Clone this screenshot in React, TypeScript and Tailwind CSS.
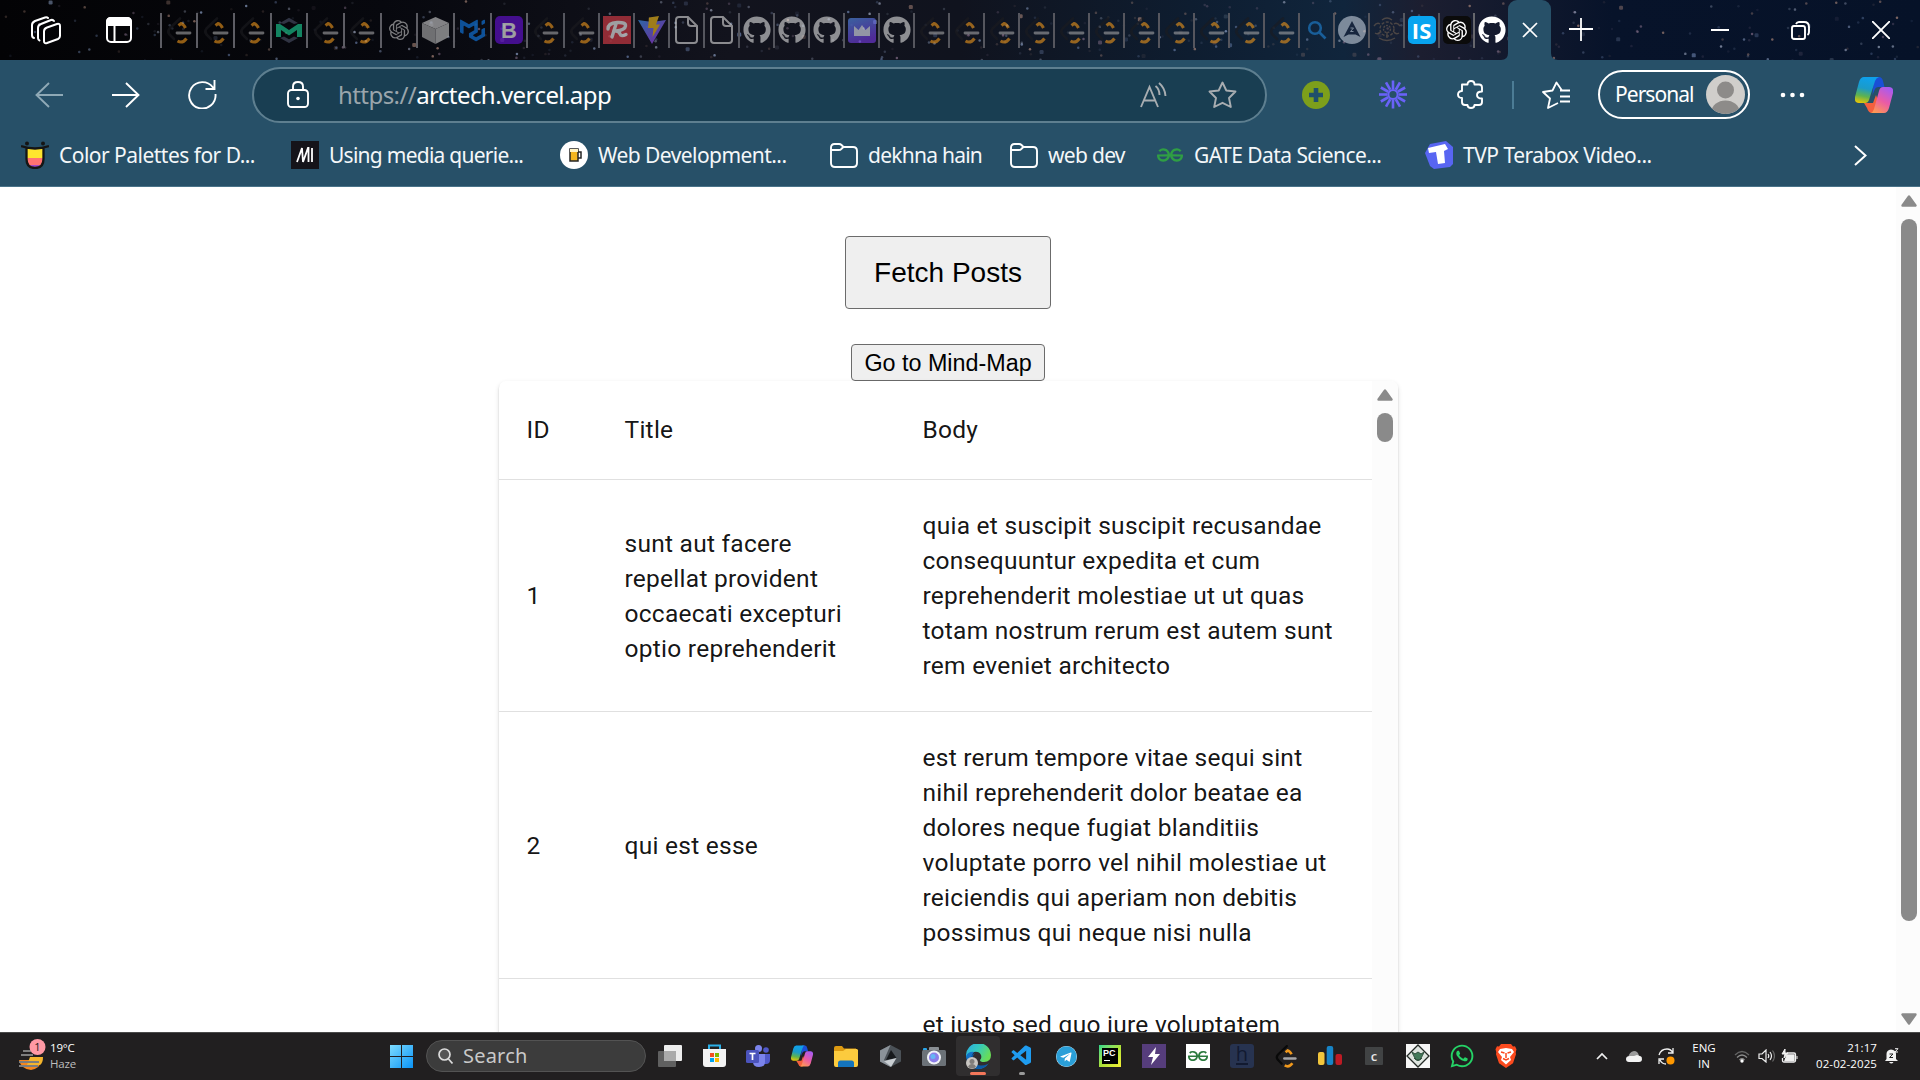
import React from 'react';
import { FaGithub, FaWhatsapp, FaTelegram } from 'react-icons/fa';
import { SiOpenai, SiMui, SiBrave, SiGeeksforgeeks } from 'react-icons/si';
import { VscVscode } from 'react-icons/vsc';

/* ---------- small drawings ---------- */

const LeetCode = ({ size = 28, dark = '#1c1c20' }: { size?: number; dark?: string }) => (
  <svg width={size} height={size} viewBox="0 0 28 28" fill="none" strokeWidth="2.6" strokeLinecap="round">
    <path d="M15 2.5 4.5 12.5Q2 15.5 4.5 18.5L9 23" stroke={dark} />
    <path d="M13.500 9.500 16 7.500Q18.500 8 20.500 12M12.500 25Q17.500 28 21.500 22.500" stroke="#f0981c" strokeLinecap="butt" strokeWidth="3" />
    <path d="M12 17H25" stroke="#a4a4a6" strokeWidth="2.8" />
  </svg>
);

const Mailtrap = () => (
  <svg width="28" height="28" viewBox="0 0 28 28">
    <path d="M5 7 14 1.8 23 7l-4 1-5-2.6L9 8ZM5 22l9 5 9-5-4-1.5-5 2.7-5-2.7Z" fill="#4c5268" />
    <path d="M1 21V8h4l9 6 9-6h4v13h-5v-7l-8 5.500-8-5.500v7Z" fill="#1dd79a" />
  </svg>
);

const Cube = () => (
  <svg width="29" height="29" viewBox="0 0 29 29">
    <path d="M14.5 1 28 7 14.5 13 1 7Z" fill="#d3d3d3" />
    <path d="M1 7 14.5 13V28L1 21Z" fill="#b4b4b4" />
    <path d="M28 7 14.5 13V28L28 21Z" fill="#cbcbcb" />
  </svg>
);

const Vite = () => (
  <svg width="28" height="28" viewBox="0 0 28 28">
    <defs>
      <linearGradient id="vite" x1="0" y1="0" x2="1" y2="1">
        <stop stopColor="#41a0ff" />
        <stop offset="1" stopColor="#bd34fe" />
      </linearGradient>
    </defs>
    <path d="M0 4 14 28 28 4 14 6Z" fill="url(#vite)" />
    <path d="M11 1.5 21 0 18 8.5h4L14.5 21l1-9H10Z" fill="#ffc61a" />
  </svg>
);

const Doc = () => (
  <svg width="23" height="28" viewBox="0 0 23 28" fill="none" stroke="#dcdcdc" strokeWidth="2">
    <path d="M13 1H4Q1 1 1 4V24Q1 27 4 27H19Q22 27 22 24V10L13 1V7Q13 10 16 10H22" />
  </svg>
);

const Crown = () => (
  <svg width="28" height="25" viewBox="0 0 28 25">
    <defs>
      <linearGradient id="crown" x1="0" y1="0" x2="0.4" y2="1">
        <stop stopColor="#5796f5" />
        <stop offset="1" stopColor="#7a3bea" />
      </linearGradient>
    </defs>
    <rect width="28" height="25" rx="3" fill="url(#crown)" />
    <path d="M6 8l4.500 4L14 7l3.500 5L22 8v10H6Z" fill="#e9ecff" />
  </svg>
);

const Emblem = () => (
  <svg width="28" height="26" viewBox="0 0 28 26" fill="none" stroke="#6f5f50" strokeWidth="1.400">
    <circle cx="14" cy="12" r="7" strokeDasharray="3 1.500" />
    <circle cx="14" cy="12" r="3.500" strokeDasharray="2 1" />
    <path d="M1 9q3-4 6-2M27 9q-3-4-6-2M2 16q3 2 5-1M26 16q-3 2-5-1M9 3q5-4 10 0M6 21q8 5 16 0M14 15v6" />
  </svg>
);

const Copilot = ({ size, id }: { size: number; id: string }) => (
  <svg width={size} height={size} viewBox="0 0 38 38">
    <defs>
      <linearGradient id={id + 'a'} x1="0.3" y1="0" x2="0.1" y2="1">
        <stop stopColor="#0fa0ea" />
        <stop offset="0.4" stopColor="#1b9bc8" />
        <stop offset="0.7" stopColor="#5fb34e" />
        <stop offset="1" stopColor="#f6c800" />
      </linearGradient>
      <linearGradient id={id + 'b'} x1="0.7" y1="0" x2="0.2" y2="1">
        <stop stopColor="#a95bf0" />
        <stop offset="0.5" stopColor="#ea5ba6" />
        <stop offset="1" stopColor="#ff9a52" />
      </linearGradient>
    </defs>
    <path d="M19 1h5q3 0 4 4l1.500 6h-6q-3 0-4 3l-2 5Z" fill="#1a4fd6" />
    <path d="M9 27h9l3-8 3 8-4 10h-3q-3.500 0-5-5Z" fill="#f4603e" />
    <path d="M9 1H24q-3 1-4 4l-6 19q-1 3-4 3H4q-5 0-4-6L4 6Q5.500 1 9 1Z" fill={'url(#' + id + 'a)'} />
    <path d="M28 11h6q5 0 4 6l-4 15q-1.500 5-5 5H16q2-1 3-4l5-18q1-4 4-4Z" fill={'url(#' + id + 'b)'} />
  </svg>
);

const Workspaces = () => (
  <svg width="30" height="29" viewBox="0 0 30 29" fill="none" stroke="#fff" strokeWidth="2" strokeLinejoin="round" strokeLinecap="round">
    <path d="M16 11.500 26 8q3-.8 3 2V20q0 2-2 3L16 27q-3 1-3-2V15.500q0-3 3-4Z" />
    <path d="M8.500 24.500Q7 24 7 22V12q0-3 3-4L20 4q2-.5 3 1" />
    <path d="M3 22q-2-.5-2-3V9q0-2.500 3-4L14 1.500q2-.5 3 .5" />
  </svg>
);

const TabActions = () => (
  <svg width="26" height="26" viewBox="0 0 26 26" fill="none" stroke="#fff" strokeWidth="2">
    <rect x="1" y="1" width="24" height="24" rx="4" />
    <path d="M1 8V5Q1 1 5 1H21q4 0 4 4V8Z" fill="#fff" />
    <path d="M8.500 7V25" />
  </svg>
);

/* ---------- title bar ---------- */

const stars = Array.from({ length: 420 }, (_, i) => {
  const n = (k: number) => {
    const v = Math.sin(i * 12.9898 + k * 78.233) * 43758.5453;
    return v - Math.floor(v);
  };
  const tint = ['#8fa3c8', '#aeb8d0', '#87708a', '#6d83ae', '#b08a7c'][Math.floor(n(4) * 5)];
  return { x: n(1) * 1920, y: n(2) * 60, s: n(3) > 0.88 ? 4 : 2.5, o: 0.1 + n(5) * n(5) * 0.6, tint };
});

const Starfield = () => (
  <svg className="absolute inset-0" width="1920" height="60">
    {stars.map((s, i) => (
      <rect key={i} x={s.x} y={s.y} width={s.s} height={s.s} rx="1.200" fill={s.tint} opacity={s.o} />
    ))}
  </svg>
);

const RLogo = () => (
  <svg width="28" height="28" viewBox="0 0 28 28">
    <rect width="28" height="28" fill="#e8404a" />
    <path d="M13 8 9 21M5 13Q5 7 14 6.500q9-.5 8.500 3.500-.5 4-9.500 5 3 0 4 3 1 3 6 .5" fill="none" stroke="#fff" strokeWidth="3.400" strokeLinecap="round" strokeLinejoin="round" />
  </svg>
);

const Boot = () => (
  <div className="flex h-7 w-7 items-center justify-center rounded-[5px] bg-[#6a11e0] font-['Liberation_Sans',sans-serif] text-[22px] font-bold text-white">B</div>
);

const lc = <LeetCode />;
const gh = <FaGithub size={28} color="#e0e0e0" />;
const wideTabs: React.ReactNode[] = [
  lc, lc, lc, <Mailtrap />, lc, lc, <SiOpenai size={20} color="#ccc" />, <Cube />, <SiMui size={25} color="#1180f2" />, <Boot />, lc,
];
const narrowTabs: React.ReactNode[] = [
  lc, <RLogo />, <Vite />, <Doc />, <Doc />, gh, gh, gh, <Crown />, gh,
  lc, lc, lc, lc, lc, lc, lc, lc, lc, lc, lc,
  <svg width="20" height="20" viewBox="0 0 20 20" fill="none" stroke="#1f86d8" strokeWidth="2.600"><circle cx="8" cy="8" r="5.800" /><path d="M12 12l6.500 6.500" /></svg>,
  <svg width="28" height="28" viewBox="0 0 28 28"><circle cx="14" cy="14" r="14" fill="#c4cedb" /><path d="M14 5 22.500 21 17.500 18.500h-7L5.500 21Z" fill="#1b2740" /><path d="M12.500 12h3l-3 3.500h3" stroke="#c4cedb" fill="none" /></svg>,
  <Emblem />,
];

const TitleBar = () => (
  <header className="relative flex h-[60px] shrink-0 items-center overflow-hidden bg-[linear-gradient(90deg,#030305_0%,#07080e_20%,#12131d_38%,#10131e_50%,#0e1d30_62%,#10253c_70%,#1c1e30_74%,#07132a_84%,#061228_100%)]">
    <Starfield />
    <div className="relative flex h-full w-full items-center">
      <div className="flex w-[159.500px] shrink-0 items-center pl-[31px]">
        <Workspaces />
        <div className="ml-[45px]"><TabActions /></div>
      </div>
      {wideTabs.map((t, i) => (
        <div key={i} className="flex h-[35px] w-[36.700px] shrink-0 items-center justify-center border-l-2 border-[#5d5d64]">
          <div className="opacity-60">{t}</div>
        </div>
      ))}
      {narrowTabs.map((t, i) => (
        <div key={i} className="flex h-[35px] w-[35px] shrink-0 items-center justify-center border-l-2 border-[#55565e]">
          <div className="opacity-60">{t}</div>
        </div>
      ))}
      <div className="flex h-[35px] w-[35px] shrink-0 items-center justify-center border-l-2 border-[#55565e]">
        <div className="flex h-7 w-7 items-center justify-center rounded-[5px] bg-[#08a4ef] font-['Open_Sans',sans-serif] text-[22px] font-bold text-white">IS</div>
      </div>
      <div className="flex h-[35px] w-[35px] shrink-0 items-center justify-center border-l-2 border-[#55565e]">
        <div className="flex h-7 w-7 items-center justify-center rounded-[5px] bg-[#0b0b0b]"><SiOpenai size={21} color="#fff" /></div>
      </div>
      <div className="flex h-[35px] w-[35px] shrink-0 items-center justify-center border-l-2 border-[#66676d]">
        <FaGithub size={28} color="#fff" />
      </div>
      <div className="relative flex h-full w-[43px] shrink-0 items-center justify-center rounded-t-[9px] bg-[#275068]">
        <svg className="absolute bottom-0 -left-[7px]" width="7" height="7"><path d="M7 0v7H0Q7 7 7 0Z" fill="#275068" /></svg>
        <svg className="absolute bottom-0 -right-[7px]" width="7" height="7"><path d="M0 0v7h7Q0 7 0 0Z" fill="#275068" /></svg>
        <svg width="16" height="16" viewBox="0 0 16 16" stroke="#fff" strokeWidth="1.700"><path d="M1 1l14 14M15 1 1 15" /></svg>
      </div>
      <svg className="ml-[18px] shrink-0" width="24" height="24" viewBox="0 0 24 24" stroke="#fff" strokeWidth="1.800"><path d="M0 11h24M12 0v23" /></svg>
      <div className="ml-auto flex w-[210px] shrink-0 items-center">
        <svg width="18" height="20" viewBox="0 0 18 20" stroke="#fff" strokeWidth="2" className="ml-px"><path d="M0 10h18" /></svg>
        <svg className="ml-[62px]" width="19" height="19" viewBox="0 0 19 19" fill="none" stroke="#fff" strokeWidth="1.900"><rect x="1" y="5" width="13" height="13" rx="2" /><path d="M5 3Q6 1 8 1h5q5 0 5 5v5q0 2-1.500 3" /></svg>
        <svg className="ml-[62px]" width="18" height="18" viewBox="0 0 18 18" stroke="#fff" strokeWidth="1.900"><path d="M0 0l18 18M18 0 0 18" /></svg>
      </div>
    </div>
  </header>
);

/* ---------- toolbar ---------- */

const Toolbar = () => (
  <div className="flex h-[69px] items-center pl-[35px]">
    <svg width="28" height="26" viewBox="0 0 28 26" fill="none" stroke="#8fa9b6" strokeWidth="1.900"><path d="M28 13H1.500M14 1 1.500 13 14 25" /></svg>
    <svg className="ml-[49px]" width="28" height="26" viewBox="0 0 28 26" fill="none" stroke="#fff" strokeWidth="1.900"><path d="M0 13H26.500M14 1 26.500 13 14 25" /></svg>
    <svg className="ml-[48px]" width="29" height="29" viewBox="0 0 29 29" fill="none" stroke="#fff" strokeWidth="1.900"><path d="M27.500 14A13.200 13.200 0 1 1 25 7.500L26.500 9M26.500 0V9H17.500" /></svg>
    <div className="ml-[35px] flex h-[56px] w-[1015px] items-center rounded-full border-2 border-[#5e7f90] bg-[#193e52] pl-[33px]">
      <svg width="22" height="27" viewBox="0 0 22 27" fill="none" stroke="#fff" strokeWidth="1.900"><rect x="1" y="9" width="20" height="17" rx="3.500" /><path d="M6 9V5.500q0-4.500 5-4.500t5 4.500V9" /><circle cx="11" cy="17.500" r="1.800" fill="#fff" stroke="none" /></svg>
      <div className="ml-[29px] w-[700px] whitespace-nowrap font-['Noto_Sans','Open_Sans',sans-serif] text-[24px] leading-8 tracking-[-0.57px] text-[#9aa5ac]">
        https://<span className="text-white">arctech.vercel.app</span>
      </div>
      <svg className="ml-auto" width="27" height="26" viewBox="0 0 27 26" fill="none" stroke="#a8adb1" strokeWidth="1.900"><path d="M1 25 9.500 5 18 25M4 18.500H15M15.500 4q4 3 4 9M19 1q6 5 6.500 13" /></svg>
      <svg className="ml-[41px] mr-[28px]" width="29" height="28" viewBox="0 0 29 28" fill="none" stroke="#a8adb1" strokeWidth="1.900" strokeLinejoin="round"><path d="M14.500 1.500 18.300 9.500 27.500 10.500 21 17 22.800 26 14.500 21.800 6.200 26 8 17 1.500 10.500 10.700 9.500Z" /></svg>
    </div>
    <svg className="ml-[35px]" width="28" height="28" viewBox="0 0 28 28"><circle cx="14" cy="14" r="14" fill="#7d9f1b" /><path d="M14 7v14M7 14h14" stroke="#20506b" strokeWidth="4.600" /></svg>
    <svg className="ml-[49px]" width="28" height="29" viewBox="-14 -14.500 28 29" fill="none" stroke="#6a62f8" strokeWidth="2.600">
      <circle r="4.600" strokeWidth="2" />
      {Array.from({ length: 12 }, (_, i) => <path key={i} d="M0-5.500V-14" transform={'rotate(' + i * 30 + ')'} />)}
    </svg>
    <svg className="ml-[50px]" width="27" height="29" viewBox="0 0 27 29" fill="none" stroke="#fff" strokeWidth="1.900" strokeLinejoin="round"><path d="M5 4.500H10.500Q10.500 1 14 1t3.500 3.500H22q3 0 3 3V11.500q-5 0-5 3.500t5 3.500V22q0 3-3 3H17.500q0 3-3.500 3T10.500 25H8q-3 0-3-3V18q-4 0-4-3.500T5 11Z" /></svg>
    <div className="ml-[28px] h-7 w-[2px] bg-[#4c7c95]" />
    <svg className="ml-[28px]" width="29" height="28" viewBox="0 0 29 28" fill="none" stroke="#fff" strokeWidth="1.800" strokeLinejoin="round"><path d="M20 9.500 14.500 1.500 10.500 9.500 1 11 8 17.500 6 27 16 22M18 9.500H28M18 15.500H28M18 20.500H28" /></svg>
    <div className="ml-[27px] flex h-[49px] w-[152px] items-center rounded-full border-2 border-white pl-[15px]">
      <div className="w-[89px] whitespace-nowrap font-['Noto_Sans','Open_Sans',sans-serif] text-[21px] tracking-[-0.95px] text-white">Personal</div>
      <svg className="ml-0.5 shrink-0" width="39" height="39" viewBox="0 0 39 39"><defs><clipPath id="avatar"><circle cx="19.500" cy="19.500" r="19.500" /></clipPath></defs><g clipPath="url(#avatar)"><rect width="39" height="39" fill="#d0cecb" /><circle cx="19.500" cy="15" r="8.500" fill="#8d8b89" /><ellipse cx="19.500" cy="37" rx="14" ry="11.500" fill="#8d8b89" /></g></svg>
    </div>
    <svg className="ml-[30px]" width="25" height="6" viewBox="0 0 25 6" fill="#fff"><circle cx="3" cy="3" r="2.300" /><circle cx="12.500" cy="3" r="2.300" /><circle cx="22" cy="3" r="2.300" /></svg>
    <div className="ml-[50px]"><Copilot size={38} id="tb" /></div>
  </div>
);

const Folder = () => (
  <svg width="28" height="25" viewBox="0 0 28 25" fill="none" stroke="#fff" strokeWidth="1.900" strokeLinejoin="round"><path d="M1 4.500Q1 1 4.500 1H9q1.500 0 2.500 1L13.500 4H23q4 0 4 4V20q0 4-4 4H5q-4 0-4-4ZM1 7H8.500q2 0 3-1.200L13.500 4" /></svg>
);

const bookmarks: { icon: React.ReactNode; text: string; cls: string }[] = [
  {
    icon: <svg width="28" height="28" viewBox="0 0 28 28"><circle cx="6" cy="2.500" r="2" fill="#151515" /><circle cx="22" cy="2.500" r="2" fill="#151515" /><path d="M5.500 7h17V18q0 9-8.500 9t-8.500-9Z" fill="#ffe52e" /><path d="M6 17h16q0 7-3 8H9q-3-2-3-8Z" fill="#ff7272" /><path d="M9 24h10q-2 3-5 3t-5-3Z" fill="#a24ac8" /><path d="M0 5q14 5 28 0M5.500 7V18q0 9 8.500 9t8.500-9V7" fill="none" stroke="#151515" strokeWidth="2.300" /></svg>,
    text: 'Color Palettes for D...', cls: 'w-[270px] tracking-[-0.52px]',
  },
  {
    icon: <svg width="28" height="28" viewBox="0 0 28 28"><rect width="28" height="28" fill="#15141a" /><path d="M6 21 11 7l1 14L17 7h.5v14M21 7v14" fill="none" stroke="#fff" strokeWidth="1.800" /></svg>,
    text: 'Using media querie...', cls: 'w-[269px] tracking-[-0.74px]',
  },
  {
    icon: <svg width="28" height="28" viewBox="0 0 28 28"><circle cx="14" cy="14" r="14" fill="#fff" /><path d="M10 8h8v12h-8Z" fill="#f4b51e" stroke="#252525" strokeWidth="1.500" /><path d="M18 11h3v6h-3" fill="none" stroke="#252525" strokeWidth="1.500" /><path d="M10 8h8v3h-8Z" fill="#fff3c4" /></svg>,
    text: 'Web Development...', cls: 'w-[270px] tracking-[-0.56px]',
  },
  { icon: <Folder />, text: 'dekhna hain', cls: 'w-[180px] tracking-[-0.75px]' },
  { icon: <Folder />, text: 'web dev', cls: 'w-[146px] tracking-[-0.7px]' },
  { icon: <SiGeeksforgeeks size={26} color="#2f9e44" />, text: 'GATE Data Science...', cls: 'w-[269px] tracking-[-0.56px]' },
  {
    icon: <svg width="28" height="28" viewBox="0 0 28 28"><path d="M5 3 21 0l7 6v17l-3 3-16 2-4-3L0 12Z" fill="#5865f2" /><path d="M3 7 20 3l3 5-4 2 1 12-7 1-2-12-7 1Z" fill="#fff" /></svg>,
    text: 'TVP Terabox Video...', cls: 'w-[429px] tracking-[-0.5px]',
  },
];

const Bookmarks = () => (
  <div className="flex h-[58px] items-center border-b border-[#4a7389] pb-[5px] pl-[21px]">
    {bookmarks.map((b) => (
      <div key={b.text} className={'flex shrink-0 items-center ' + b.cls}>
        <div className="flex w-7 shrink-0 justify-center">{b.icon}</div>
        <div className="ml-[10px] whitespace-nowrap pb-px font-['Noto_Sans','Open_Sans',sans-serif] text-[21px] leading-7 text-[#f4f7f9]">{b.text}</div>
      </div>
    ))}
    <svg width="13" height="21" viewBox="0 0 13 21" fill="none" stroke="#fff" strokeWidth="2"><path d="M1 1 11.500 10.500 1 20" /></svg>
  </div>
);

/* ---------- page ---------- */

const rows = [
  {
    id: '1',
    title: 'sunt aut facere\nrepellat provident\noccaecati excepturi\noptio reprehenderit',
    body: 'quia et suscipit suscipit recusandae\nconsequuntur expedita et cum\nreprehenderit molestiae ut ut quas\ntotam nostrum rerum est autem sunt\nrem eveniet architecto',
  },
  {
    id: '2',
    title: 'qui est esse',
    body: 'est rerum tempore vitae sequi sint\nnihil reprehenderit dolor beatae ea\ndolores neque fugiat blanditiis\nvoluptate porro vel nihil molestiae ut\nreiciendis qui aperiam non debitis\npossimus qui neque nisi nulla',
  },
  {
    id: '3',
    title: 'ea molestias quasi\nexercitationem\nrepellat qui ipsa sit\naut',
    body: 'et iusto sed quo iure voluptatem\noccaecati omnis eligendi aut ad\nvoluptatem doloribus vel accusantium\nquis pariatur molestiae porro eius\nodio et labore et velit aut',
  },
];

const Arrow = ({ down }: { down?: boolean }) => (
  <svg className={down ? 'rotate-180' : ''} width="16" height="12" viewBox="0 0 16 12"><path d="M8 1.500 14.500 10.500H1.500Z" fill="#8a8a8a" stroke="#8a8a8a" strokeWidth="2.400" strokeLinejoin="round" /></svg>
);

const PostsTable = () => (
  <div className="flex h-[700px] w-[899px] shrink-0 overflow-hidden rounded-[7px] bg-white shadow-[0_3px_2px_-2px_rgba(0,0,0,0.2),0_2px_2px_rgba(0,0,0,0.14),0_2px_5px_rgba(0,0,0,0.12)]">
    <table className="w-[873px] shrink-0 table-fixed border-separate border-spacing-0 self-start font-['Roboto',sans-serif] text-[24.500px] leading-[35.030px] tracking-[0.262px] text-[rgba(0,0,0,0.93)]">
      <thead>
        <tr className="h-[99px] text-left">
          <th className="w-[98px] border-b border-[#e0e0e0] pl-7 font-normal">ID</th>
          <th className="w-[298px] border-b border-[#e0e0e0] pl-7 font-normal">Title</th>
          <th className="border-b border-[#e0e0e0] pl-7 font-normal">Body</th>
        </tr>
      </thead>
      <tbody>
        {rows.map((r) => (
          <tr key={r.id}>
            <td className="border-b border-[#e0e0e0] py-7 pl-7 align-middle">{r.id}</td>
            <td className="whitespace-pre border-b border-[#e0e0e0] py-7 pl-7 align-middle">{r.title}</td>
            <td className="whitespace-pre border-b border-[#e0e0e0] py-7 pl-7 align-middle">{r.body}</td>
          </tr>
        ))}
      </tbody>
    </table>
    <div className="flex w-[26px] shrink-0 flex-col items-center bg-[#fcfcfc] pt-2">
      <Arrow />
      <div className="mt-3 h-[29px] w-4 rounded-full bg-[#8a8a8a]" />
    </div>
  </div>
);

const Page = () => (
  <div className="flex h-[845px] shrink-0 overflow-hidden bg-white">
    <main className="flex flex-1 flex-col items-center pt-[49px]">
      <button className="h-[73px] w-[206px] shrink-0 rounded-[4px] border border-[#6b6b6b] bg-[#efefef] font-['Liberation_Sans',sans-serif] text-[28px] text-black">Fetch Posts</button>
      <button className="mt-[35px] h-[37px] w-[194px] shrink-0 rounded-[4px] border border-[#6b6b6b] bg-[#efefef] font-['Liberation_Sans',sans-serif] text-[23.330px] leading-8 text-black">Go to Mind-Map</button>
      <PostsTable />
    </main>
    <div className="flex w-6 shrink-0 flex-col items-center bg-[#fcfcfc] pl-[2px] pt-2">
      <Arrow />
      <div className="mb-[92px] mt-3 w-4 flex-1 rounded-full bg-[#8a8a8a]" />
      <div className="mb-[7px]"><Arrow down /></div>
    </div>
  </div>
);

/* ---------- taskbar ---------- */

const TaskView = () => (
  <svg width="24" height="22" viewBox="0 0 24 22"><rect x="6" width="18" height="16" rx="1" fill="#ededed" /><rect y="6" width="18" height="16" rx="1" fill="#606060" /><rect x="6" y="6" width="12" height="10" fill="#aaa" /></svg>
);
const Store = () => (
  <svg width="23" height="24" viewBox="0 0 23 24"><path d="M6 6V1.500h11V6" fill="none" stroke="#2bb0e8" strokeWidth="2" /><path d="M0 5h23v15q0 3-3 3H3q-3 0-3-3Z" fill="#f3f3f3" /><path d="M7 9h4v4H7Z" fill="#f25022" /><path d="M12 9h4v4h-4Z" fill="#7fba00" /><path d="M7 14h4v4H7Z" fill="#00a4ef" /><path d="M12 14h4v4h-4Z" fill="#ffb900" /></svg>
);
const Teams = () => (
  <svg width="24" height="22" viewBox="0 0 24 22"><circle cx="20" cy="5" r="2.800" fill="#5059c9" /><path d="M17 9h7v6q0 4-4 4h-3Z" fill="#5059c9" /><circle cx="12.500" cy="3.500" r="3.500" fill="#7b83eb" /><path d="M7 9h12v8q0 5-6 5t-6-5Z" fill="#7b83eb" /><rect y="5" width="13" height="13" rx="1.500" fill="#4b53bc" /><path d="M3.500 8.500h6M6.500 8.500V15" stroke="#fff" strokeWidth="1.700" /></svg>
);
const Explorer = () => (
  <svg width="24" height="21" viewBox="0 0 24 21"><path d="M0 2q0-2 2-2h6l2 2.500h12V8H0Z" fill="#dd9a11" /><path d="M0 5h9l3-2h11l1 1v15q0 2-2 2H2q-2 0-2-2Z" fill="#fccb3e" /><path d="M4 21v-4q0-2.500 2.500-2.500h11q2.500 0 2.500 2.500v4Z" fill="#1474bd" /></svg>
);
const Gem = () => (
  <svg width="21" height="22" viewBox="0 0 21 22"><path d="M10.500 0 21 5.500v11L10.500 22 0 16.500v-11Z" fill="#4b5157" /><path d="M10.500 0 4 15l6.500 7L0 16.500v-11Z" fill="#8b9299" /><path d="M11 5 16.500 13 6 15Z" fill="#17191c" /><path d="M4 16 16.500 13 11 22Z" fill="#c9ced2" /></svg>
);
const Camera = () => (
  <svg width="24" height="19" viewBox="0 0 24 19"><rect x="7" width="10" height="6" rx="1" fill="#8a8f94" /><rect x="1" y="1" width="4" height="3" rx="1" fill="#2aa5e8" /><rect y="3" width="24" height="16" rx="1.500" fill="#6c7278" /><circle cx="12" cy="10.500" r="7" fill="#f1f3f8" /><circle cx="12" cy="10.500" r="5" fill="#8b7de8" /><circle cx="11" cy="9.500" r="2.500" fill="#64b6f4" /></svg>
);
const Edge = () => (
  <svg width="25" height="25" viewBox="0 0 25 25">
    <defs>
      <linearGradient id="edge" x1="0" y1="0" x2="1" y2="0.500"><stop stopColor="#2aa9e6" /><stop offset="0.500" stopColor="#35c9bd" /><stop offset="1" stopColor="#68dd57" /></linearGradient>
    </defs>
    <path d="M0 12A12.500 12.500 0 0 1 25 11Q25 18 18 18q-4 0-4-2 2-2 1-5-2-4-7-3-6 1-8 6Z" fill="url(#edge)" />
    <path d="M0 12Q3 7 8 8q-3 3-2 8 2 7 9 7 4 0 8-4-4 6-11 6Q1 24 0 12Z" fill="#1272c6" />
    <path d="M9 9q-4 4-1 9 4 6 14 2-4 5-11 5-8-3-7-11Q6 10 9 9Z" fill="#0c59a4" />
    <circle cx="6" cy="19" r="6" fill="#c9c6c2" /><circle cx="6" cy="17.500" r="2.500" fill="#807d7a" /><path d="M2 23q1-3 4-3t4 3q-4 3-8 0Z" fill="#807d7a" />
  </svg>
);
const PyCharm = () => (
  <div className="flex h-[22px] w-[22px] items-center justify-center bg-gradient-to-br from-[#21d789] via-[#a9e23a] to-[#f5ee34]">
    <div className="h-4 w-4 bg-black px-px font-['Liberation_Sans',sans-serif] text-[9px] font-bold leading-[10px] text-white">PC<div className="ml-px mt-[2px] h-px w-[6px] bg-white" /></div>
  </div>
);
const Emb = () => (
  <svg width="24" height="24" viewBox="0 0 24 24"><rect width="24" height="24" fill="#f6f6f6" /><path d="M12 1 23 12 12 23 1 12Z" fill="#dfe5e0" stroke="#242a26" strokeWidth="1.300" /><path d="M6 8q3 8 6 8t6-8l-3 2-3-2-3 2ZM8 14q4 5 8 0" fill="#437a5a" stroke="#30503e" strokeWidth="1" /></svg>
);
const Brave = () => (
  <svg width="22" height="24" viewBox="0 0 22 24">
    <path d="M6 0h10l2 2.500 2-.3 1.500 3-.8 3 .3 2-3 9L11 24l-7-4.800-3-9 .3-2-.8-3L2 2.200l2 .3Z" fill="#fb4a1e" />
    <path d="M5 5l6-1 6 1 2 3-4 5 1 3-5 4.500L6 16l1-3-4-5Z" fill="#fff" />
    <path d="M6 8l3.500 1M16 8l-3.500 1M11 9v5M8 14.500l3 1.500 3-1.500" fill="none" stroke="#fb4a1e" strokeWidth="1.500" />
  </svg>
);

const apps: React.ReactNode[] = [
  <TaskView />, <Store />, <Teams />, <Copilot size={22} id="tk" />, <Explorer />, <Gem />, <Camera />, <Edge />,
  <VscVscode size={24} color="#1f9cf0" />,
  <div className="rounded-full bg-white"><FaTelegram size={21} color="#2a9fd8" /></div>,
  <PyCharm />,
  <svg width="24" height="24" viewBox="0 0 24 24"><rect width="24" height="24" fill="#563d7c" /><path d="M14 3 6 13h5L9 21l9-11h-5Z" fill="#fff" /></svg>,
  <div className="flex h-6 w-6 items-center justify-center bg-white"><SiGeeksforgeeks size={20} color="#2b7a3d" /></div>,
  <div className="flex h-6 w-6 flex-col items-center rounded-[3px] bg-[#273350] font-['Open_Sans',sans-serif] text-[20px] leading-[19px] text-[#121a30]">h<div className="h-[2px] w-3 bg-[#121a30]" /></div>,
  <LeetCode size={24} dark="#090909" />,
  <svg width="24" height="20" viewBox="0 0 24 20"><rect y="6" width="6.500" height="13" rx="2" fill="#f2c63c" /><rect x="8.700" width="6.500" height="19" rx="2" fill="#1784c7" /><rect x="17.500" y="8" width="6.500" height="11" rx="2" fill="#bd1b24" /></svg>,
  <div className="flex h-[18px] w-[18px] items-center justify-center rounded-[1px] bg-[#414344] font-['Open_Sans',sans-serif] text-[13px] font-semibold leading-[18px] text-[#e8e8e8]">c</div>,
  <Emb />,
  <FaWhatsapp size={26} color="#25d366" />,
  <Brave />,
];

const Taskbar = () => (
  <footer className="flex h-12 shrink-0 items-center border-t border-[#4a4a4a] bg-[#211f20] pb-px font-['Open_Sans',sans-serif] text-white">
    <div className="flex w-[390px] shrink-0 items-center pl-[19px]">
      <svg width="28" height="36" viewBox="0 0 28 36"><path d="M0 22h22q0 8-10 10Q2 31 0 22Z" fill="#f5871f" /><path d="M11 19h13q0 6-3 8H8Z" fill="#f5b52c" /><path d="M4 13h8M2 17h12M0 24h20M0 28h19" stroke="#7e7e7e" strokeWidth="2" /><circle cx="18.500" cy="9" r="8" fill="#ff99a4" /><text x="18.500" y="13" textAnchor="middle" fontSize="11" fontFamily="Open Sans" fill="#1a1a1a">1</text></svg>
      <div className="ml-[3px] text-[11.500px] leading-4 tracking-[-0.2px]">19°C<div className="text-[#bdbdbd]">Haze</div></div>
    </div>
    <svg width="23" height="23" viewBox="0 0 23 23">
      <defs><linearGradient id="win" x1="0" y1="0" x2="1" y2="1"><stop stopColor="#7ddcff" /><stop offset="1" stopColor="#0a93f5" /></linearGradient></defs>
      <path d="M0 0h11v11H0ZM12 0h11v11H12ZM0 12h11v11H0ZM12 12h11v11H12Z" fill="url(#win)" />
    </svg>
    <div className="ml-[13px] flex h-8 w-[220px] shrink-0 items-center rounded-full border border-[#535353] bg-[#3c3c3c] pl-[11px]">
      <svg width="15" height="16" viewBox="0 0 15 16" fill="#555" stroke="#dcdcdc" strokeWidth="1.700"><circle cx="6.500" cy="6.500" r="5.500" /><path d="M10.500 11l4 4.500" /></svg>
      <div className="ml-[10px] font-['Noto_Sans',sans-serif] text-[20px] leading-7 tracking-[0.2px] text-[#c9c9c9]">Search</div>
    </div>
    <div className="ml-[2px] flex">
      {apps.map((a, i) => (
        <div key={i} className={'relative flex h-10 w-11 shrink-0 items-center justify-center ' + (i === 7 ? 'rounded bg-[#302e2f]' : '')}>
          {a}
          {i === 7 && <div className="absolute bottom-px h-[3px] w-4 rounded-full bg-[#f4775a]" />}
          {i === 8 && <div className="absolute bottom-px h-[3px] w-[6px] rounded-full bg-[#9a9a9a]" />}
        </div>
      ))}
    </div>
    <svg className="ml-[68px] shrink-0" width="12" height="8" viewBox="0 0 12 8" fill="none" stroke="#f0f0f0" strokeWidth="1.700"><path d="M1 7l5-5 5 5" /></svg>
    <svg className="ml-[18px] shrink-0" width="16" height="11" viewBox="0 0 16 11"><path d="M2 7Q3 1 8 0q4 0 5 5 3 0 3 2Z" fill="#9b9b9b" /><path d="M0 8q0-3 4-3l4 0 3-1q5 1 5 4 0 3-3 3H3q-3 0-3-3Z" fill="#f3f3f3" /></svg>
    <svg className="ml-[16px] shrink-0" width="18" height="17" viewBox="0 0 18 17" fill="none" stroke="#f0f0f0" strokeWidth="1.300"><path d="M1 7Q3 1 9 1q4 0 6 4M15 0v5h-5M1 16v-5h5M2 12q2 4 6 4" /><circle cx="12.500" cy="12.500" r="4" fill="#ff9800" stroke="none" /></svg>
    <div className="ml-[14px] w-[28px] text-center text-[11.500px] leading-4">ENG<br />IN</div>
    <svg className="ml-[16px] shrink-0" width="16" height="13" viewBox="0 0 16 13" fill="none" strokeWidth="1.300"><path d="M1 5Q8-2 15 5" stroke="#646464" /><path d="M3 7.500q5-5 10 0M5.500 10q2.500-2.500 5 0" stroke="#8c8c8c" /><circle cx="8" cy="11" r="1.700" fill="#fff" /></svg>
    <svg className="ml-[8px] shrink-0" width="17" height="14" viewBox="0 0 17 14" fill="none" stroke="#f0f0f0" strokeWidth="1.200"><path d="M1 5h3l4-4v12L4 9.500H1ZM10 5q1.500 2 0 4M12 3q3 4 0 8" /><path d="M14.500 1.500q4 5.500 0 11" stroke="#666" /></svg>
    <svg className="ml-[6px] shrink-0" width="17" height="15" viewBox="0 0 17 15" fill="none" stroke="#f0f0f0" strokeWidth="1.300"><path d="M6 4h7q1.500 0 1.500 1.500v6Q14.500 13 13 13H3Q1.500 13 1.500 11.500V9" /><path d="M6 6h7v5.500H4Z" fill="#f0f0f0" /><path d="M16 7v3M4 0 1 5h3L3 9l4-5H4Z" fill="#f0f0f0" strokeWidth="1" /></svg>
    <div className="ml-auto mr-[8px] whitespace-nowrap text-right text-[11.500px] leading-4 tracking-[0.1px]">21:17<br />02-02-2025</div>
    <svg className="mr-[21px] shrink-0" width="14" height="16" viewBox="0 0 14 16"><path d="M1.500 11V6q0-4 4.500-4.500 5 .5 5 4.500v5l2 2H0ZM4 14h4.500q-2 3-4.500 0Z" fill="#f2f2f2" /><path d="M4.500 6h3.500l-3.500 3.500H8" stroke="#222" fill="none" /><path d="M10 .7h3l-3 3.300h3" stroke="#f2f2f2" fill="none" /></svg>
  </footer>
);

export default function App() {
  return (
    <div className="flex h-[1080px] w-[1920px] flex-col overflow-hidden bg-white">
      <TitleBar />
      <div className="h-[127px] shrink-0 bg-[#275068]">
        <Toolbar />
        <Bookmarks />
      </div>
      <Page />
      <Taskbar />
    </div>
  );
}
